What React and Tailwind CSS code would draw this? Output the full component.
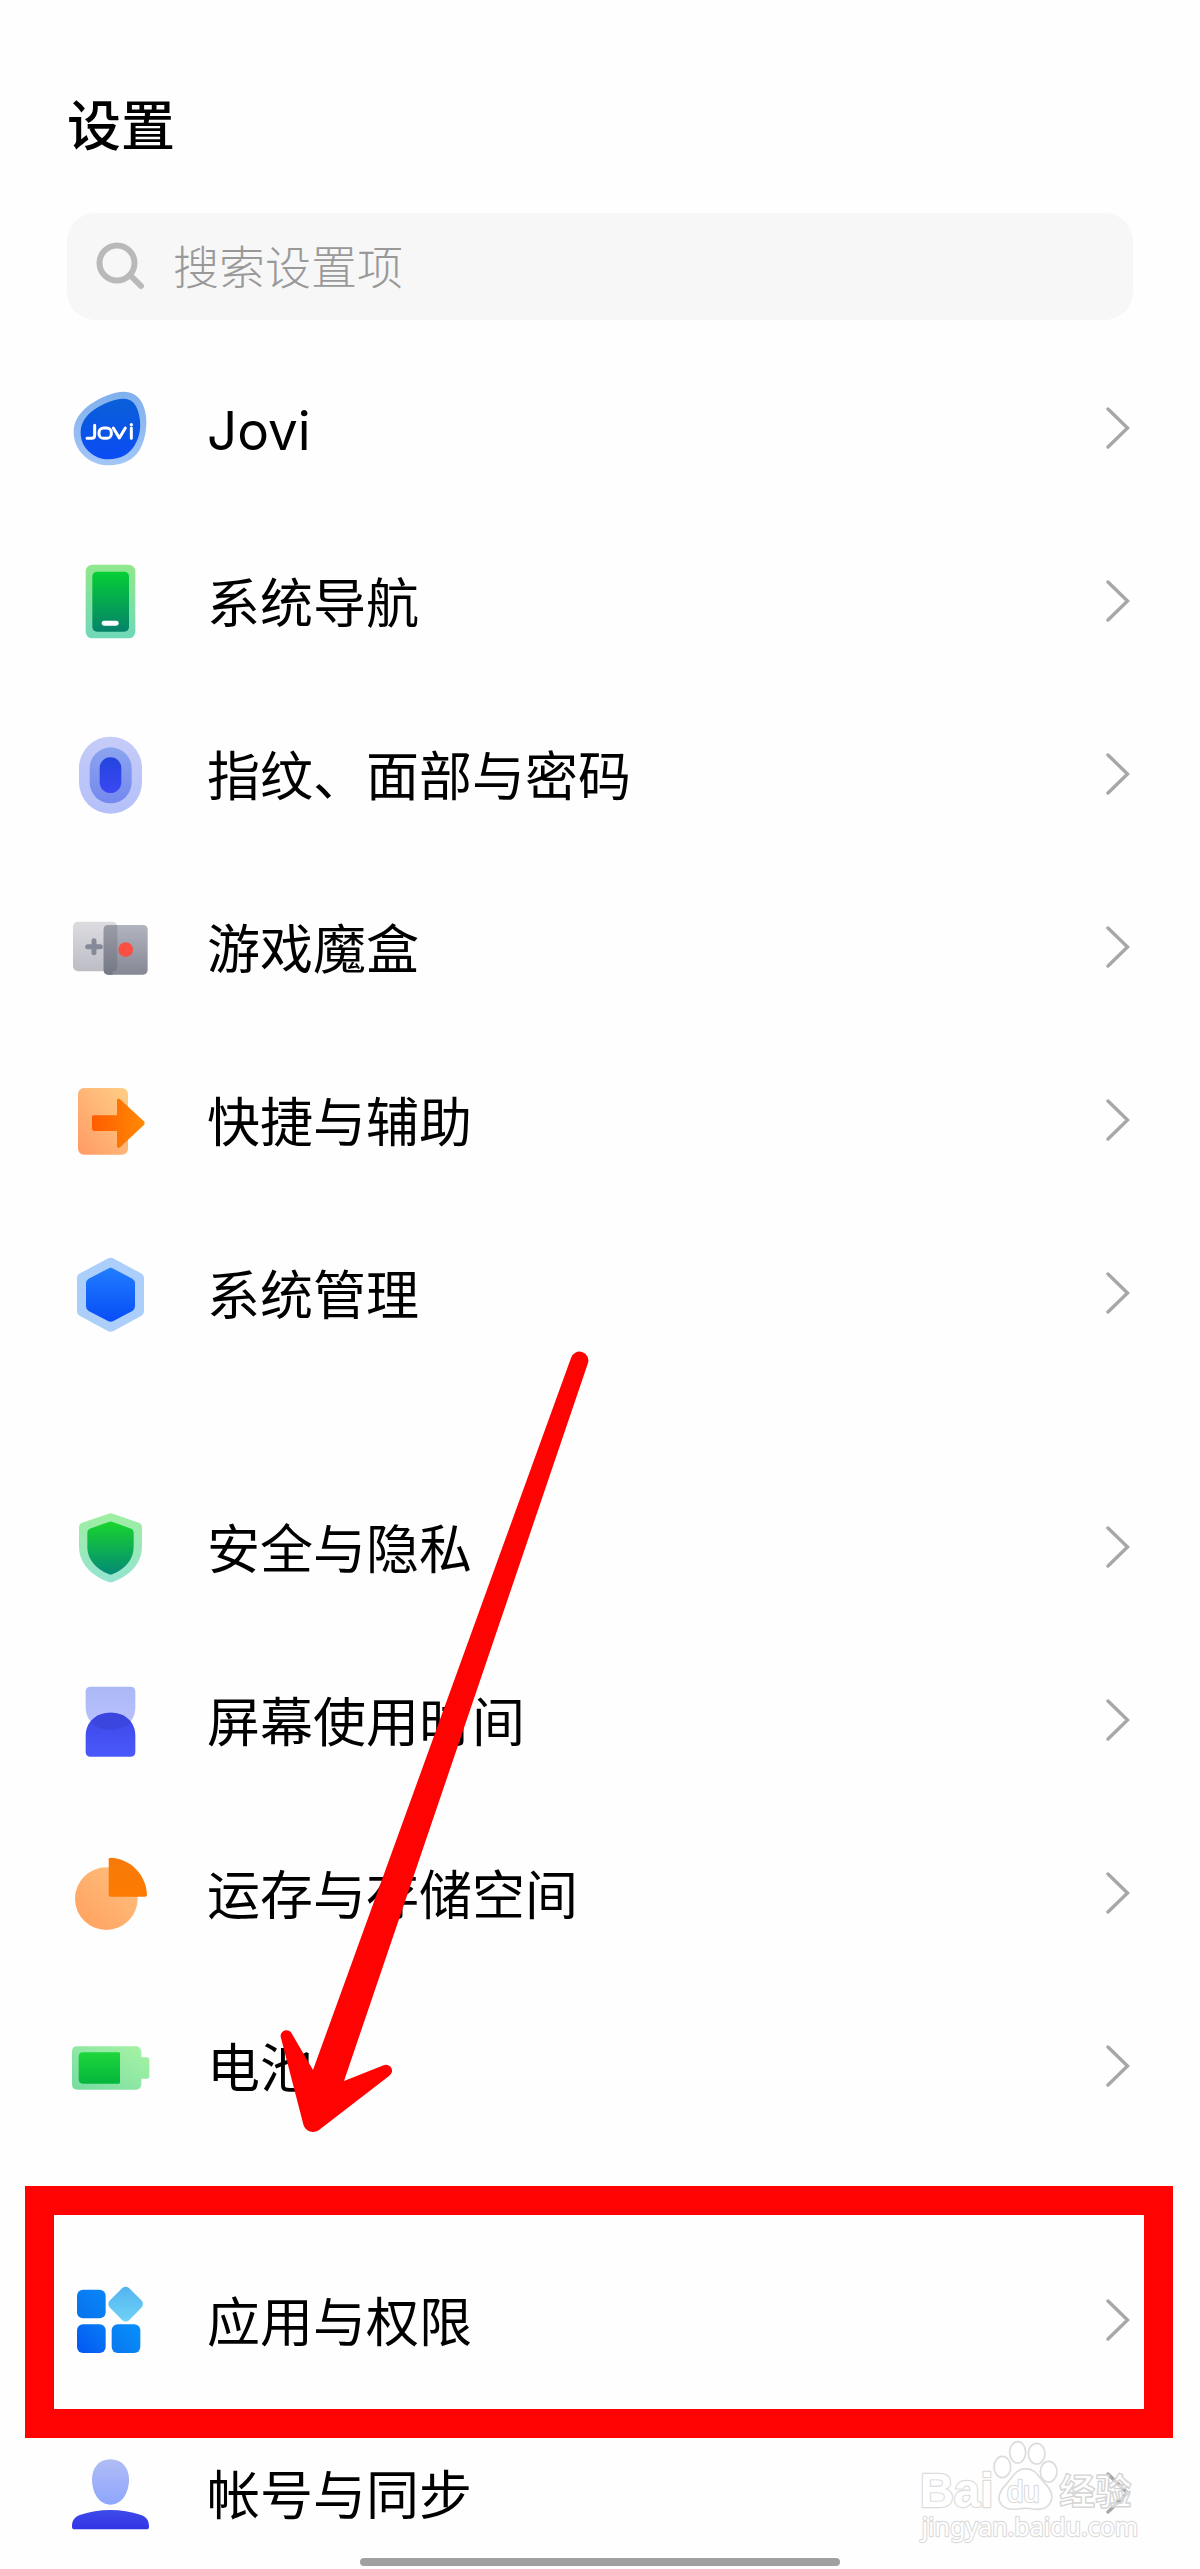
import React from "react";

function Gradient({ id, from, to, horizontal = false, diagonal = false }) {
  return (
    <linearGradient
      id={id}
      x1="0"
      y1={diagonal ? "1" : "0"}
      x2={horizontal || diagonal ? "1" : "0"}
      y2={horizontal || diagonal ? "0" : "1"}
    >
      <stop offset="0" stopColor={from} />
      <stop offset="1" stopColor={to} />
    </linearGradient>
  );
}

function Icon({ viewBox, children }) {
  return (
    <svg viewBox={viewBox} className="size-20 shrink-0" aria-hidden="true">
      {children}
    </svg>
  );
}

const JoviIcon = () => (
  <Icon viewBox="60 52 240 240">
    <defs>
      <Gradient id="jovi-rim" from="#7fb0ee" to="#a3c6f6" />
      <Gradient id="jovi-core" from="#0a5fd8" to="#0b4cf4" />
    </defs>
    <path
      d="M222 63C258 63 277 88 285 120C294 156 288 202 270 236C252 268 218 284 176 284C120 284 71 242 71 184C71 148 92 122 122 100C152 80 190 63 222 63Z"
      fill="url(#jovi-rim)"
    />
    <path
      d="M219 84C243 83 258 98 265 124C275 160 272 194 254 224C238 252 210 266 176 266C132 266 92 232 92 186C92 156 108 134 134 116C160 98 192 85 219 84Z"
      fill="url(#jovi-core)"
    />
    <g fill="none" stroke="#fff" strokeWidth="9" strokeLinecap="round" strokeLinejoin="round">
      <path d="M134 164V194Q134 203 125 203H111" />
      <rect x="147" y="172" width="37" height="31" rx="14" />
      <path d="M190 172L208 202L226 172M244 172V203" />
    </g>
    <circle cx="244" cy="162" r="5" fill="#fff" />
  </Icon>
);

const NavigationIcon = () => (
  <Icon viewBox="60 571 240 240">
    <defs>
      <Gradient id="nav-rim" from="#90e88c" to="#70d8b8" />
      <Gradient id="nav-core" from="#06cf36" to="#04826a" />
    </defs>
    <rect x="107" y="582" width="149" height="221" rx="20" fill="url(#nav-rim)" />
    <rect x="127" y="603" width="110" height="180" rx="14" fill="url(#nav-core)" />
    <rect x="155" y="750" width="51" height="15" rx="7" fill="#fff" />
  </Icon>
);

const FingerprintIcon = () => (
  <Icon viewBox="60 70 240 240">
    <defs>
      <Gradient id="fp-outer" from="#c6ccf8" to="#b4c0fa" />
      <Gradient id="fp-mid" from="#8ba4ee" to="#7488ee" />
      <Gradient id="fp-core" from="#2444dd" to="#3a48f4" />
    </defs>
    <rect x="87" y="78" width="189" height="231" rx="94" fill="url(#fp-outer)" />
    <rect x="119" y="110" width="126" height="168" rx="63" fill="url(#fp-mid)" />
    <rect x="149" y="140" width="65" height="107" rx="32" fill="url(#fp-core)" />
  </Icon>
);

const GameBoxIcon = () => (
  <Icon viewBox="60 589 240 240">
    <defs>
      <Gradient id="game-left" from="#dcdce0" to="#bcbdc5" />
      <Gradient id="game-right" from="#b2b4be" to="#858895" />
      <Gradient id="game-lap" from="#9a9ca6" to="#747885" />
    </defs>
    <rect x="69" y="633" width="133" height="149" rx="15" fill="url(#game-left)" />
    <rect x="161" y="643" width="132" height="149" rx="14" fill="url(#game-right)" />
    <path d="M175 643H202V768Q202 782 188 782V792H175Q161 792 161 778V657Q161 643 175 643Z" fill="url(#game-lap)" />
    <path d="M132 690V726M113 708H151" stroke="#858998" strokeWidth="15" strokeLinecap="round" />
    <circle cx="227" cy="717" r="22" fill="#fa4f43" />
  </Icon>
);

const ShortcutIcon = () => (
  <Icon viewBox="60 88 240 240">
    <defs>
      <Gradient id="short-card" from="#ff9a64" to="#ffcf86" diagonal />
      <Gradient id="short-arrow" from="#ff5c00" to="#ff8a05" horizontal />
    </defs>
    <rect x="84" y="112" width="150" height="200" rx="18" fill="url(#short-card)" />
    <path
      d="M130 194H201V149Q202 140 210 146L281 211Q287 217 281 224L211 289Q202 296 201 286V241H134Q126 241 126 233V200Q126 194 130 194Z"
      fill="url(#short-arrow)"
    />
  </Icon>
);

const SystemIcon = () => (
  <Icon viewBox="60 607 240 240">
    <defs>
      <Gradient id="sys-core" from="#207dff" to="#084cf6" />
    </defs>
    <path
      d="M172 624Q182 618 192 624L273 668Q282 673 282 683V781Q282 791 273 796L192 840Q182 846 172 840L90 796Q81 791 81 781V683Q81 673 90 668Z"
      fill="#abcffa"
    />
    <path
      d="M174 654Q182 649 190 654L247 684Q255 689 255 698V767Q255 776 247 781L190 811Q182 816 174 811L116 781Q108 776 108 767V698Q108 689 116 684Z"
      fill="url(#sys-core)"
    />
  </Icon>
);

const ShieldIcon = () => (
  <Icon viewBox="60 49 240 240">
    <defs>
      <Gradient id="shield-rim" from="#9eeea0" to="#94e4d2" />
      <Gradient id="shield-core" from="#18d52c" to="#038a76" />
    </defs>
    <path
      d="M174 70Q182 66 190 70L267 96Q276 99 276 110V166C276 220 239 255 190 273Q182 277 174 273C125 255 87 220 87 166V110Q87 99 96 96Z"
      fill="url(#shield-rim)"
    />
    <path
      d="M176 94Q182 91 188 94L244 114Q251 117 251 125V170C251 208 222 238 188 250Q182 253 176 250C142 238 112 208 112 170V125Q112 117 119 114Z"
      fill="url(#shield-core)"
    />
  </Icon>
);

const ScreenTimeIcon = () => (
  <Icon viewBox="60 568 240 240">
    <defs>
      <Gradient id="time-top" from="#aab8f6" to="#bcc2ff" />
      <Gradient id="time-bottom" from="#3c48e8" to="#4b58fb" />
    </defs>
    <path
      d="M122 588H241Q256 588 256 603V650C256 690 226 718 182 718C138 718 107 690 107 650V603Q107 588 122 588Z"
      fill="url(#time-top)"
    />
    <path
      d="M182 666C226 666 256 694 256 735V783Q256 798 241 798H122Q107 798 107 783V735C107 694 138 666 182 666Z"
      fill="url(#time-bottom)"
    />
    <path d="M121 695C133 677 154 666 182 666C210 666 230 677 243 695C228 710 207 717 182 717C157 717 136 710 121 695Z" fill="#3a46de" />
  </Icon>
);

const StorageIcon = () => (
  <Icon viewBox="60 67 240 240">
    <defs>
      <Gradient id="store-disc" from="#ff9f5c" to="#ffc282" diagonal />
      <Gradient id="store-slice" from="#f67a0a" to="#ff7a00" />
    </defs>
    <circle cx="169" cy="204" r="94" fill="url(#store-disc)" />
    <path d="M176 86Q176 81 181 81C243 84 288 132 291 192Q291 198 286 198H182Q176 198 176 192Z" fill="url(#store-slice)" />
  </Icon>
);

const BatteryIcon = () => (
  <Icon viewBox="60 586 240 240">
    <defs>
      <Gradient id="bat-rim" from="#76dba2" to="#a8f4a4" diagonal />
      <Gradient id="bat-core" from="#1ed63c" to="#04b63c" />
    </defs>
    <path
      d="M82 647H258Q273 647 274 664V680H291Q298 680 298 687V738Q298 744 291 744H274V760Q273 777 258 777H82Q66 777 66 761V663Q66 647 82 647Z"
      fill="url(#bat-rim)"
    />
    <path d="M99 665H206Q210 665 210 669V755Q210 759 206 759H99Q86 759 86 746V678Q86 665 99 665Z" fill="url(#bat-core)" />
  </Icon>
);

const AppsIcon = () => (
  <Icon viewBox="210 358 240 240">
    <defs>
      <Gradient id="apps-a" from="#0672ec" to="#0a86f8" diagonal />
      <Gradient id="apps-b" from="#0356f2" to="#087cf6" diagonal />
      <Gradient id="apps-c" from="#0878ee" to="#0790fc" diagonal />
      <Gradient id="apps-d" from="#52b4f0" to="#70d2f6" />
    </defs>
    <rect x="231" y="387" width="86" height="86" rx="18" fill="url(#apps-a)" />
    <rect x="231" y="491" width="86" height="86" rx="18" fill="url(#apps-b)" />
    <rect x="335" y="491" width="86" height="86" rx="18" fill="url(#apps-c)" />
    <path
      d="M367 382Q377 374 387 382L424 419Q434 430 424 441L388 478Q377 487 366 478L330 441Q320 430 330 419Z"
      fill="url(#apps-d)"
    />
  </Icon>
);

const AccountIcon = () => (
  <Icon viewBox="210 877 240 240">
    <defs>
      <Gradient id="acc-head" from="#b0bcf4" to="#8ea6fe" />
      <Gradient id="acc-body" from="#3d4be8" to="#3434e6" />
    </defs>
    <path d="M331 896C366 896 387 922 387 956C387 998 365 1032 331 1032C298 1032 276 998 276 956C276 922 297 896 331 896Z" fill="url(#acc-head)" />
    <path d="M216 1098C216 1078 224 1068 242 1062C296 1043 366 1043 421 1062C439 1068 447 1078 447 1098Q447 1106 439 1106H224Q216 1106 216 1098Z" fill="url(#acc-body)" />
  </Icon>
);

function Chevron() {
  return (
    <svg viewBox="0 0 24 42" className="h-[42px] w-6 shrink-0" aria-hidden="true">
      <path d="M2 2L21.5 21L2 40" fill="none" stroke="#a6a7a6" strokeWidth="3.4" strokeLinecap="round" />
    </svg>
  );
}

function SettingRow({ icon: RowIcon, label, highlighted }) {
  return (
    <li className="relative">
      <a href="#" className="flex h-[173px] items-center gap-[57px] px-[70px]">
        <RowIcon />
        <span className="flex-1 pt-1.5 text-[53px] leading-[64px] text-black">{label}</span>
        <Chevron />
      </a>
      {highlighted && (
        <div className="pointer-events-none absolute -top-[47px] right-[27px] -bottom-[32px] left-[25px] border-[29px] border-[#ff0202]" />
      )}
    </li>
  );
}

function PointerArrow() {
  return (
    <svg
      viewBox="270 1340 330 800"
      className="pointer-events-none absolute -top-[120px] left-[270px] h-[800px] w-[330px]"
      aria-hidden="true"
    >
      <path
        d="M571 1358A8.6 8.6 0 0 1 588 1363L344 2081L383 2065.500A6 6 0 0 1 389 2076L319 2130A10 10 0 0 1 303.500 2125L281 2038A5.700 5.700 0 0 1 292 2034L313 2070Z"
        fill="#ff0202"
      />
    </svg>
  );
}

function Watermark() {
  return (
    <svg
      viewBox="355 840 660 330"
      className="pointer-events-none absolute right-[62px] bottom-[19px] h-[110px] w-[220px]"
      aria-hidden="true"
    >
      <g fill="#fff" fillOpacity="0.8" stroke="#dcdcdc" strokeWidth="5" strokeLinejoin="round">
        <ellipse cx="608" cy="921" rx="25" ry="32" />
        <ellipse cx="654" cy="877" rx="24" ry="32" />
        <ellipse cx="711" cy="881" rx="25" ry="31" />
        <ellipse cx="747" cy="935" rx="25" ry="31" />
        <path d="M678 926C706 926 716 948 734 968C752 986 762 1004 754 1024C746 1046 722 1050 700 1047C684 1044 670 1044 654 1047C630 1050 606 1044 599 1022C594 1002 606 986 622 970C640 950 650 926 678 926Z" />
      </g>
      <g fill="#fff" stroke="#dcdcdc" strokeWidth="7" strokeLinejoin="round" className="[paint-order:stroke]">
        <text x="360" y="1042" fontSize="142" fontWeight="700" fontFamily="Liberation Sans, sans-serif">Bai</text>
        <text x="622" y="1025" fontSize="88" fontWeight="400" fontFamily="Liberation Sans, sans-serif">du</text>
        <text x="366" y="1128" fontSize="75" fontFamily="Noto Sans, sans-serif">jingyan.baidu.com</text>
      </g>
      <text
        x="778"
        y="1036"
        fontSize="109"
        fontWeight="700"
        fill="#fff"
        fillOpacity="0.6"
        stroke="#d4d4d4"
        strokeWidth="4"
        strokeLinejoin="round"
        fontFamily="Noto Sans CJK SC, sans-serif"
      >
        经验
      </text>
    </svg>
  );
}

const groups = [
  [
    { label: "Jovi", icon: JoviIcon },
    { label: "系统导航", icon: NavigationIcon },
    { label: "指纹、面部与密码", icon: FingerprintIcon },
    { label: "游戏魔盒", icon: GameBoxIcon },
    { label: "快捷与辅助", icon: ShortcutIcon },
    { label: "系统管理", icon: SystemIcon },
  ],
  [
    { label: "安全与隐私", icon: ShieldIcon },
    { label: "屏幕使用时间", icon: ScreenTimeIcon },
    { label: "运存与存储空间", icon: StorageIcon },
    { label: "电池", icon: BatteryIcon },
  ],
  [
    { label: "应用与权限", icon: AppsIcon, highlighted: true },
    { label: "帐号与同步", icon: AccountIcon },
  ],
];

export default function App() {
  return (
    <div className="relative bg-[#fefefe] font-['Inter','Noto_Sans_CJK_SC',sans-serif]">
      <header className="px-[67px] pt-[95px]">
        <h1 className="text-[54px] leading-[64px] font-medium text-black">设置</h1>
        <label className="mt-[54px] flex h-[107px] items-center gap-[26px] rounded-[28px] bg-[#f7f7f7] px-7">
          <svg viewBox="0 0 52 52" className="size-[52px] shrink-0" aria-hidden="true">
            <circle cx="22" cy="22" r="17.500" fill="none" stroke="#b9b9b9" strokeWidth="6" />
            <path d="M35 34L46 45" stroke="#b9b9b9" strokeWidth="6" strokeLinecap="round" />
          </svg>
          <input
            type="search"
            aria-label="搜索设置项"
            placeholder="搜索设置项"
            className="h-16 min-w-0 flex-1 bg-transparent pt-0.5 text-[46px] font-light text-black outline-none placeholder:text-[#999999]"
          />
        </label>
      </header>

      <main className="mt-[21px] flex flex-col gap-[81px]">
        {groups.map((rows, index) => (
          <section key={rows[0].label} className="relative">
            <ul>
              {rows.map((row) => (
                <SettingRow key={row.label} {...row} />
              ))}
            </ul>
            {index === 1 && <PointerArrow />}
          </section>
        ))}
      </main>

      <footer className="relative -mt-[21px] flex justify-center pb-[3px]">
        <div className="h-2 w-[40%] rounded-full bg-[#a0a0a0]" />
      </footer>
      <Watermark />
    </div>
  );
}
